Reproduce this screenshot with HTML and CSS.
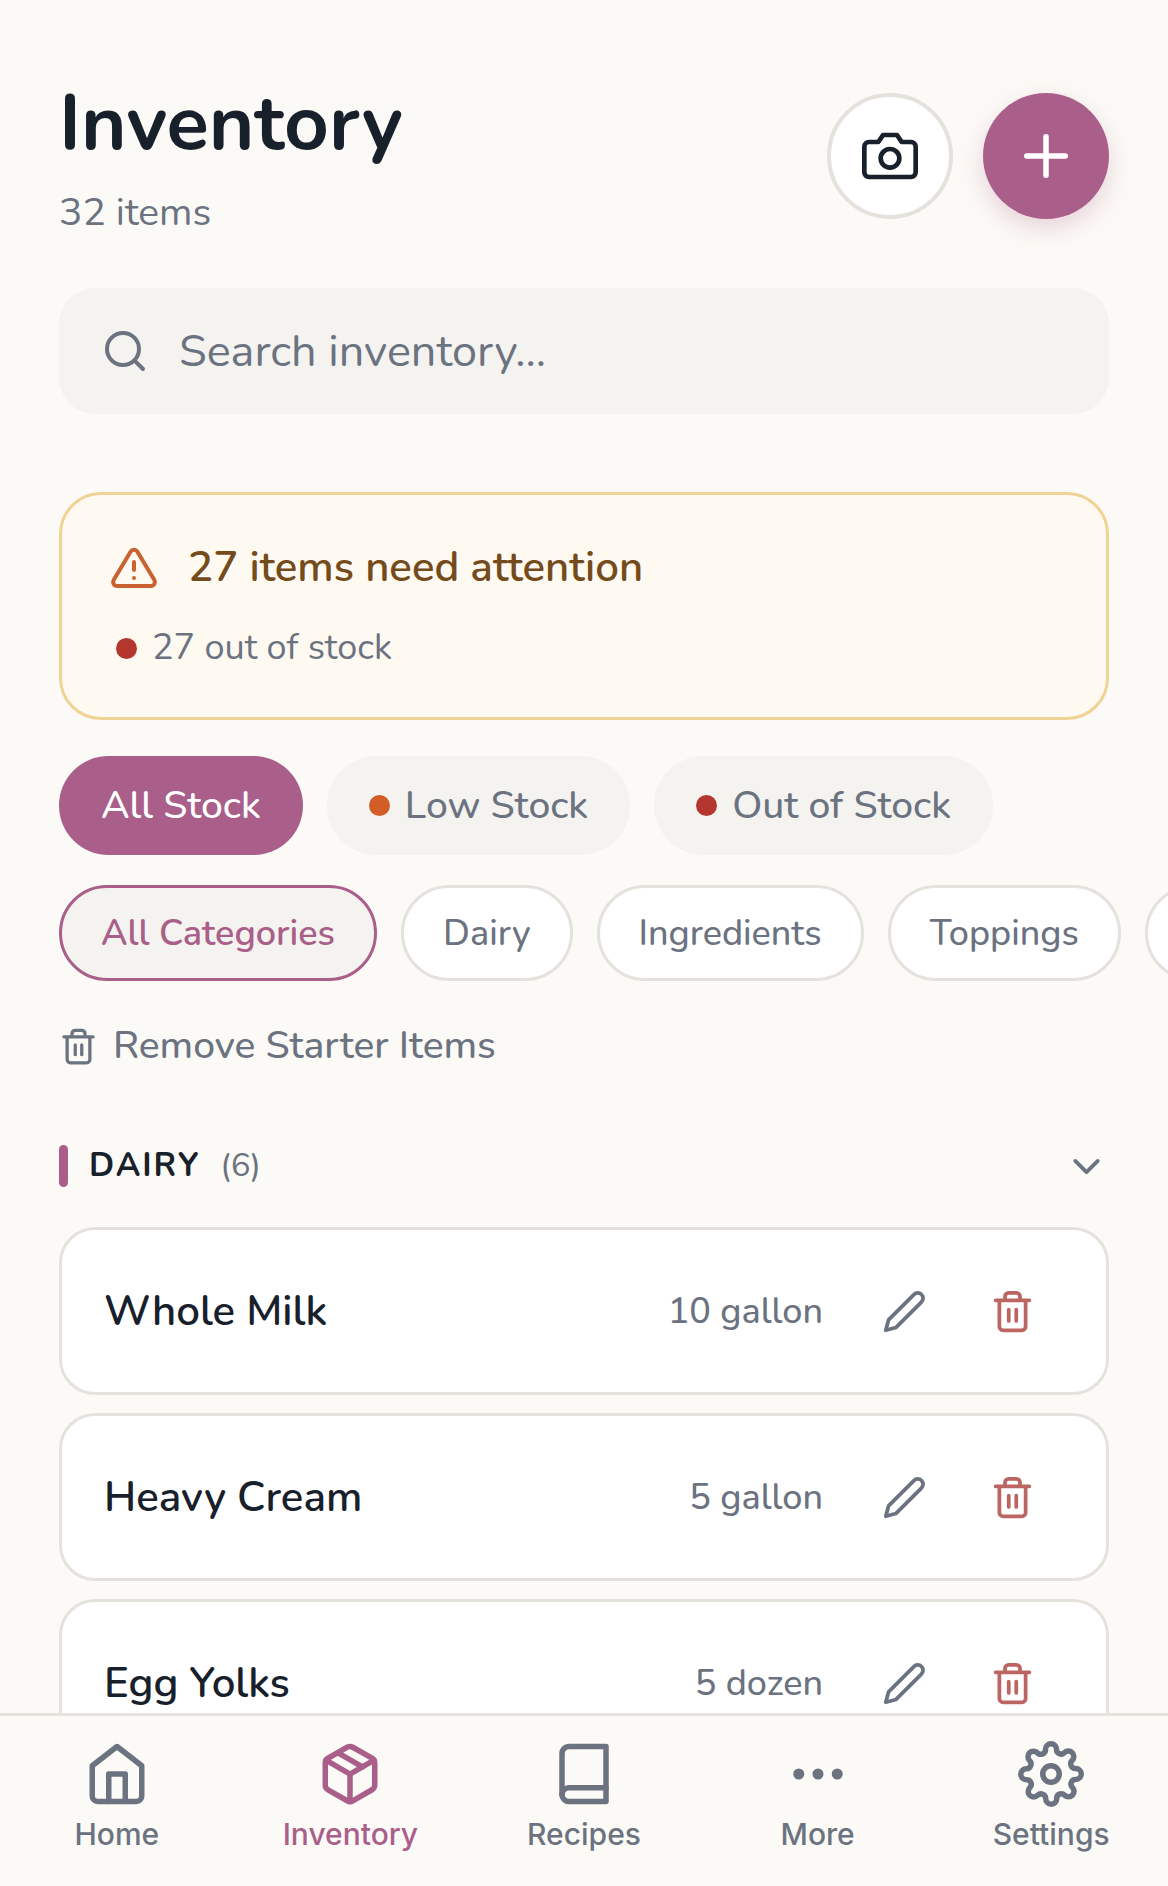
FILE: index.html
```html
<!DOCTYPE html>
<html lang="en">
<head>
  <meta charset="UTF-8" />
  <meta name="viewport" content="width=device-width, initial-scale=1.0"/>
  <title>Inventory</title>
  <link rel="stylesheet" href="styles.css">
</head>
<body>
  <!-- shared icons -->
  <svg class="sprite" aria-hidden="true">
    <symbol id="trash" viewBox="0 0 24 24">
      <path d="M3 6h18M19 6v14a2 2 0 0 1-2 2H7a2 2 0 0 1-2-2V6M8 6V4a2 2 0 0 1 2-2h4a2 2 0 0 1 2 2v2M10 11v6M14 11v6"/>
    </symbol>
    <symbol id="pencil" viewBox="0 0 24 24">
      <path d="M17 3a2.83 2.83 0 1 1 4 4L7.5 20.5 2 22l1.5-5.5L17 3z"/>
    </symbol>
  </svg>

  <main class="page">
    <header class="header">
      <div>
        <h1>Inventory</h1>
        <p class="count">32 items</p>
      </div>
      <div class="header-actions">
        <button class="round-btn" type="button" aria-label="Scan">
          <svg class="icon icon-camera" viewBox="0 0 24 24"><path d="M23 19a2 2 0 0 1-2 2H3a2 2 0 0 1-2-2V8a2 2 0 0 1 2-2h4l2-3h6l2 3h4a2 2 0 0 1 2 2z"/><circle cx="12" cy="13" r="4"/></svg>
        </button>
        <button class="round-btn primary" type="button" aria-label="Add item">
          <svg class="icon icon-lg" viewBox="0 0 24 24"><path d="M12 5v14M5 12h14"/></svg>
        </button>
      </div>
    </header>

    <label class="search">
      <svg class="icon icon-md" viewBox="0 0 24 24"><circle cx="11" cy="11" r="8"/><path d="M21 21l-4.35-4.35"/></svg>
      <input type="text" placeholder="Search inventory..." aria-label="Search inventory" />
    </label>

    <section class="alert">
      <div class="alert-title">
        <svg class="icon icon-md" viewBox="0 0 24 24"><path d="M10.29 3.86L1.82 18a2 2 0 0 0 1.71 3h16.94a2 2 0 0 0 1.71-3L13.71 3.86a2 2 0 0 0-3.42 0zM12 9v4M12 17h.01"/></svg>
        <h2>27 items need attention</h2>
      </div>
      <div class="alert-detail"><span class="dot out"></span>27 out of stock</div>
    </section>

    <div class="chips">
      <button class="chip active" type="button">All Stock</button>
      <button class="chip" type="button"><span class="dot low"></span>Low Stock</button>
      <button class="chip" type="button"><span class="dot out"></span>Out of Stock</button>
    </div>

    <div class="chips categories">
      <button class="cat active" type="button">All Categories</button>
      <button class="cat" type="button">Dairy</button>
      <button class="cat" type="button">Ingredients</button>
      <button class="cat" type="button">Toppings</button>
      <button class="cat next" type="button" aria-label="More categories"></button>
    </div>

    <button class="remove" type="button">
      <svg class="icon icon-xs"><use href="#trash"/></svg>
      Remove Starter Items
    </button>

    <section>
      <button class="group-head" type="button" aria-expanded="true">
        <span class="bar"></span>
        <span class="group-name">DAIRY</span>
        <span class="group-count">(6)</span>
        <svg class="icon icon-sm" viewBox="0 0 24 24"><path d="M6 9l6 6 6-6"/></svg>
      </button>

      <ul class="items">
        <li class="item">
          <span class="name">Whole Milk</span>
          <span class="qty">10 gallon</span>
          <button class="edit" type="button" aria-label="Edit Whole Milk"><svg class="icon icon-sm"><use href="#pencil"/></svg></button>
          <button class="delete" type="button" aria-label="Delete Whole Milk"><svg class="icon icon-sm"><use href="#trash"/></svg></button>
        </li>
        <li class="item">
          <span class="name">Heavy Cream</span>
          <span class="qty">5 gallon</span>
          <button class="edit" type="button" aria-label="Edit Heavy Cream"><svg class="icon icon-sm"><use href="#pencil"/></svg></button>
          <button class="delete" type="button" aria-label="Delete Heavy Cream"><svg class="icon icon-sm"><use href="#trash"/></svg></button>
        </li>
        <li class="item">
          <span class="name">Egg Yolks</span>
          <span class="qty">5 dozen</span>
          <button class="edit" type="button" aria-label="Edit Egg Yolks"><svg class="icon icon-sm"><use href="#pencil"/></svg></button>
          <button class="delete" type="button" aria-label="Delete Egg Yolks"><svg class="icon icon-sm"><use href="#trash"/></svg></button>
        </li>
      </ul>
    </section>
  </main>

  <nav class="tabs">
    <a href="#home">
      <svg class="icon icon-lg" viewBox="0 0 24 24"><path d="M3 9l9-7 9 7v11a2 2 0 0 1-2 2H5a2 2 0 0 1-2-2z"/><path d="M9 22V12h6v10"/></svg>
      Home
    </a>
    <a href="#inventory" class="current">
      <svg class="icon icon-lg" viewBox="0 0 24 24"><path d="M16.5 9.4l-9-5.19M21 16V8a2 2 0 0 0-1-1.73l-7-4a2 2 0 0 0-2 0l-7 4A2 2 0 0 0 3 8v8a2 2 0 0 0 1 1.73l7 4a2 2 0 0 0 2 0l7-4A2 2 0 0 0 21 16z"/><path d="M3.27 6.96L12 12.01l8.73-5.05M12 22.08V12"/></svg>
      Inventory
    </a>
    <a href="#recipes">
      <svg class="icon icon-lg" viewBox="0 0 24 24"><path d="M4 19.5A2.5 2.5 0 0 1 6.5 17H20"/><path d="M6.5 2H20v20H6.5A2.5 2.5 0 0 1 4 19.5v-15A2.5 2.5 0 0 1 6.5 2z"/></svg>
      Recipes
    </a>
    <a href="#more">
      <svg class="icon icon-lg" viewBox="0 0 24 24"><circle cx="5" cy="12" r="1"/><circle cx="12" cy="12" r="1"/><circle cx="19" cy="12" r="1"/></svg>
      More
    </a>
    <a href="#settings">
      <svg class="icon icon-lg" viewBox="0 0 24 24"><circle cx="12" cy="12" r="3"/><path d="M19.4 15a1.65 1.65 0 0 0 .33 1.82l.06.06a2 2 0 0 1 0 2.83 2 2 0 0 1-2.83 0l-.06-.06a1.65 1.65 0 0 0-1.82-.33 1.65 1.65 0 0 0-1 1.51V21a2 2 0 0 1-2 2 2 2 0 0 1-2-2v-.09A1.65 1.65 0 0 0 9 19.4a1.65 1.65 0 0 0-1.82.33l-.06.06a2 2 0 0 1-2.83 0 2 2 0 0 1 0-2.83l.06-.06a1.65 1.65 0 0 0 .33-1.82 1.65 1.65 0 0 0-1.51-1H3a2 2 0 0 1-2-2 2 2 0 0 1 2-2h.09A1.65 1.65 0 0 0 4.6 9a1.65 1.65 0 0 0-.33-1.82l-.06-.06a2 2 0 0 1 0-2.83 2 2 0 0 1 2.83 0l.06.06a1.65 1.65 0 0 0 1.82.33H9a1.65 1.65 0 0 0 1-1.51V3a2 2 0 0 1 2-2 2 2 0 0 1 2 2v.09a1.65 1.65 0 0 0 1 1.51 1.65 1.65 0 0 0 1.82-.33l.06-.06a2 2 0 0 1 2.83 0 2 2 0 0 1 0 2.83l-.06.06a1.65 1.65 0 0 0-.33 1.82V9a1.65 1.65 0 0 0 1.51 1H21a2 2 0 0 1 2 2 2 2 0 0 1-2 2h-.09a1.65 1.65 0 0 0-1.51 1z"/></svg>
      Settings
    </a>
  </nav>
</body>
</html>
```

FILE: styles.css
```css
:root {
  --bg: #fcfaf6;
  --surface: #f4f3f0;
  --border: #e5e1dc;
  --text: #18202b;
  --muted: #6b7280;
  --accent: #a95f89;
  --low: #d35d26;
  --out: #b4372f;
}
* {
  box-sizing: border-box;
}
body {
  margin: 0;
  height: 100vh;
  display: flex;
  flex-direction: column;
  background: var(--bg);
  color: var(--text);
  font-family: Nunito, Lato, "Open Sans", sans-serif;
  font-size: 39px;
}
h1, h2, p, ul {
  margin: 0;
  padding: 0;
}
button {
  font: inherit;
  color: inherit;
  border: 0;
  padding: 0;
  background: none;
  cursor: pointer;
}

/* icons */
.sprite {
  display: none;
}
.icon {
  display: block;
  flex: none;
  fill: none;
  stroke: currentColor;
  stroke-width: 2;
  stroke-linecap: round;
  stroke-linejoin: round;
}
.icon-xs { width: 39px; height: 39px; }
.icon-sm { width: 45px; height: 45px; }
.icon-md { width: 48px; height: 48px; }
.icon-camera { width: 56px; height: 56px; }
.icon-lg { width: 66px; height: 66px; }

.page {
  flex: 1;
  min-height: 0;
  overflow-y: auto;
  overflow-x: hidden;
  scrollbar-width: none;
  padding: 72px 59px 0;
}

/* header */
.header {
  display: flex;
  justify-content: space-between;
  align-items: center;
  margin-bottom: 48px;
}
h1 {
  font-size: 78px;
  line-height: 104px;
  font-weight: 700;
}
.count {
  margin-top: 10px;
  line-height: 54px;
  color: var(--muted);
}
.header-actions {
  display: flex;
  gap: 30px;
}
.round-btn {
  display: flex;
  align-items: center;
  justify-content: center;
  width: 126px;
  height: 126px;
  border-radius: 50%;
  border: 4px solid var(--border);
  background: #fff;
}
.round-btn.primary {
  border: 0;
  background: var(--accent);
  color: #fff;
  box-shadow: 0 9px 24px rgba(169, 95, 137, 0.25);
}

.search {
  display: flex;
  align-items: center;
  gap: 30px;
  height: 126px;
  padding: 0 42px;
  border-radius: 36px;
  background: var(--surface);
  color: var(--muted);
}
.search input {
  flex: 1;
  min-width: 0;
  padding: 0;
  border: 0;
  outline: 0;
  background: none;
  font: inherit;
  font-size: 45px;
  color: var(--text);
}
.search input::placeholder {
  color: var(--muted);
  opacity: 1;
}

/* stock alert */
.alert {
  margin-top: 78px;
  padding: 45px 48px;
  border: 3px solid #f0d394;
  border-radius: 42px;
  background: #fef9f1;
}
.alert-title {
  display: flex;
  align-items: center;
  gap: 30px;
  color: #c96131;
}
.alert-title h2 {
  font-size: 42px;
  line-height: 56px;
  font-weight: 600;
  color: #744b1b;
}
.alert-detail {
  display: flex;
  align-items: center;
  gap: 15px;
  margin-top: 28px;
  padding-left: 6px;
  font-size: 36px;
  line-height: 48px;
  color: var(--muted);
}
.dot {
  flex: none;
  width: 21px;
  height: 21px;
  border-radius: 50%;
}
.dot.low { background: var(--low); }
.dot.out { background: var(--out); }

/* filters */
.chips {
  display: flex;
  gap: 24px;
  margin-top: 36px;
}
.chip {
  display: flex;
  align-items: center;
  gap: 15px;
  height: 99px;
  padding: 0 42px;
  border-radius: 50px;
  background: var(--surface);
  color: var(--muted);
  font-weight: 500;
}
.chip.active {
  background: var(--accent);
  color: #fff;
}
.categories {
  margin-top: 30px;
  margin-right: -59px;
  overflow: hidden;
}
.cat {
  flex: none;
  height: 96px;
  padding: 0 39px;
  border: 3px solid var(--border);
  border-radius: 48px;
  background: #fff;
  color: var(--muted);
  font-size: 36px;
  font-weight: 500;
}
.cat.active {
  border-color: var(--accent);
  background: var(--surface);
  color: var(--accent);
  font-weight: 600;
}
.cat.next {
  width: 240px;
}
.remove {
  display: flex;
  align-items: center;
  gap: 15px;
  margin-top: 38px;
  line-height: 54px;
  color: var(--muted);
  font-weight: 500;
}

/* item groups */
.group-head {
  display: flex;
  align-items: center;
  width: 100%;
  margin: 66px 0 34px;
  font-size: 33px;
  line-height: 54px;
}
.group-head .icon {
  margin-left: auto;
  color: var(--muted);
}
.bar {
  width: 9px;
  height: 42px;
  margin-right: 21px;
  border-radius: 5px;
  background: var(--accent);
}
.group-name {
  font-weight: 700;
  letter-spacing: 2px;
}
.group-count {
  margin-left: 20px;
  color: var(--muted);
}
.items {
  list-style: none;
}
.item {
  display: flex;
  align-items: center;
  height: 168px;
  margin-bottom: 18px;
  padding: 0 46px 0 42px;
  border: 3px solid var(--border);
  border-radius: 36px;
  background: #fff;
}
.name {
  flex: 1;
  font-size: 42px;
  font-weight: 600;
}
.qty {
  margin-right: 33px;
  font-size: 36px;
  font-weight: 500;
  color: var(--muted);
}
.edit, .delete {
  display: flex;
  align-items: center;
  justify-content: center;
  width: 96px;
  height: 96px;
  color: var(--muted);
}
.delete {
  margin-left: 12px;
  color: #bb6663;
}

/* bottom tabs */
.tabs {
  display: grid;
  grid-template-columns: repeat(5, 1fr);
  height: 173px;
  padding-top: 25px;
  border-top: 3px solid var(--border);
  background: var(--bg);
}
.tabs a {
  display: flex;
  flex-direction: column;
  align-items: center;
  gap: 9px;
  font-family: Inter, Roboto, sans-serif;
  font-size: 30px;
  line-height: 36px;
  font-weight: 500;
  color: var(--muted);
  text-decoration: none;
}
.tabs a.current {
  color: var(--accent);
}
```
